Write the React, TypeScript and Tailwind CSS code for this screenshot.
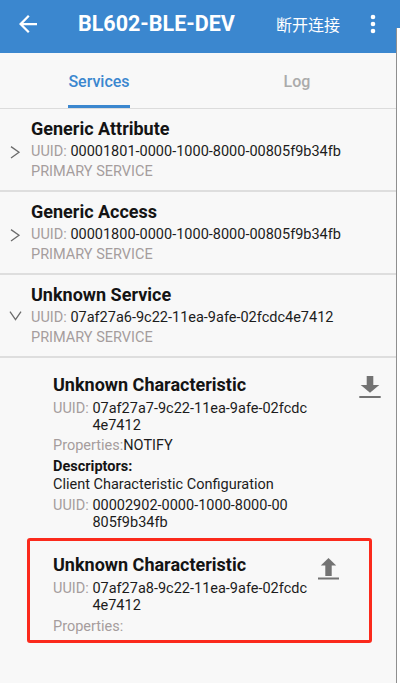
import React from "react";

type Service = { name: string; uuid: string; open?: boolean };

const services: Service[] = [
  { name: "Generic Attribute", uuid: "00001801-0000-1000-8000-00805f9b34fb" },
  { name: "Generic Access", uuid: "00001800-0000-1000-8000-00805f9b34fb" },
  { name: "Unknown Service", uuid: "07af27a6-9c22-11ea-9afe-02fcdc4e7412", open: true },
];

function Chevron({ open }: { open?: boolean }) {
  return (
    <svg width="31" height="60" fill="none" stroke="#6b6b6b" strokeWidth="1.3">
      {open ? (
        <polyline points="10,29.7 15.5,37.5 21,29.7" />
      ) : (
        <polyline points="11,30.6 19,36.3 11,42" />
      )}
    </svg>
  );
}

function ServiceRow({ name, uuid, open }: Service) {
  return (
    <div className="flex border-b-2 border-[#dedede] pt-[7px] pb-[8px]">
      <div className="w-[31px] shrink-0">
        <Chevron open={open} />
      </div>
      <div className="flex flex-col">
        <div className="text-[18px] leading-[26px] font-bold text-[#141414]">{name}</div>
        <div className="flex text-[14.5px] leading-[20px]">
          <span className="text-[#a59d9d]">UUID:&nbsp;</span>
          <span className="text-[#1c1c1c]">{uuid}</span>
        </div>
        <div className="text-[14.5px] leading-[20px] text-[#a59d9d]">PRIMARY SERVICE</div>
      </div>
    </div>
  );
}

function Uuid({ lines, className }: { lines: string[]; className: string }) {
  return (
    <div className={"flex text-[14.5px] leading-[17px] " + className}>
      <span className="text-[#a59d9d]">UUID:&nbsp;</span>
      <div className="flex flex-col text-[#1c1c1c]">
        {lines.map((l) => (
          <span key={l}>{l}</span>
        ))}
      </div>
    </div>
  );
}

function DownloadIcon() {
  return (
    <svg width="22" height="23" fill="#737373">
      <rect x="7.7" y="0" width="6.6" height="9.5" />
      <polygon points="1.7,9 20.3,9 11,16.8" />
      <rect x="0.3" y="20" width="21.4" height="2" />
    </svg>
  );
}

function UploadIcon() {
  return (
    <svg width="21" height="22" fill="#737373">
      <polygon points="10.5,0 18.2,7.6 2.8,7.6" />
      <rect x="7.3" y="7" width="6.4" height="11" />
      <rect x="0" y="19.5" width="21" height="2" />
    </svg>
  );
}

export default function App() {
  return (
    <div className="flex w-[400px] h-[683px] bg-white font-['Roboto',sans-serif] overflow-hidden">
      <div className="w-[396px] h-full shrink-0 flex flex-col bg-[#f8f8f8]">
        {/* toolbar */}
        <div className="h-[53px] shrink-0 flex items-center bg-[#3b87cf] pl-[19px] pr-[20px] pb-[5px] text-white">
          <svg width="18" height="18" viewBox="4 4 16 16" fill="#ffffff">
            <path d="M20 11H7.83l5.59-5.59L12 4l-8 8 8 8 1.41-1.41L7.83 13H20v-2z" />
          </svg>
          <div className="ml-[41px] text-[21.5px] leading-[28px] font-bold">BL602-BLE-DEV</div>
          <div className="flex-1" />
          <div className="mr-[30px] text-[16px] leading-[22px] font-['Noto_Sans_CJK_SC',sans-serif]">断开连接</div>
          <svg width="6" height="20" fill="#ffffff">
            <circle cx="3" cy="3" r="2.3" />
            <circle cx="3" cy="10" r="2.3" />
            <circle cx="3" cy="17" r="2.3" />
          </svg>
        </div>

        {/* tabs */}
        <div className="h-[56px] shrink-0 flex border-b border-[#dcdcdc]">
          <div className="flex-1 flex justify-center">
            <div className="h-full flex items-center pt-[6px] border-b-[3px] border-[#3b87cf] text-[16px] font-medium text-[#3b87cf]">
              Services
            </div>
          </div>
          <div className="flex-1 flex justify-center">
            <div className="h-full flex items-center pt-[6px] border-b-[3px] border-transparent text-[16px] font-medium text-[#ababab]">
              Log
            </div>
          </div>
        </div>

        {services.map((s) => (
          <ServiceRow key={s.uuid} {...s} />
        ))}

        {/* characteristic 1 */}
        <div className="flex pl-[53px] pt-[15px]">
          <div className="flex-1 min-w-0">
            <div className="text-[18px] leading-[24px] font-bold text-[#141414]">Unknown Characteristic</div>
            <Uuid className="mt-[3px]" lines={["07af27a7-9c22-11ea-9afe-02fcdc", "4e7412"]} />
            <div className="mt-[3px] text-[14.5px] leading-[17px]">
              <span className="text-[#a59d9d]">Properties:</span>
              <span className="text-[#1c1c1c]">NOTIFY</span>
            </div>
            <div className="mt-[4px] text-[14.5px] leading-[17px] font-bold text-[#141414]">Descriptors:</div>
            <div className="mt-[1px] text-[14.5px] leading-[17px] text-[#1c1c1c]">Client Characteristic Configuration</div>
            <Uuid className="mt-[4px]" lines={["00002902-0000-1000-8000-00", "805f9b34fb"]} />
          </div>
          <div className="w-[41px] shrink-0" />
          <div className="w-[37px] shrink-0 pt-[3px]">
            <DownloadIcon />
          </div>
        </div>

        {/* characteristic 2 */}
        <div className="relative flex pl-[53px] pt-[22px]">
          <div className="flex-1 min-w-0">
            <div className="text-[18px] leading-[24px] font-bold text-[#141414]">Unknown Characteristic</div>
            <Uuid className="mt-[3px]" lines={["07af27a8-9c22-11ea-9afe-02fcdc", "4e7412"]} />
            <div className="mt-[4px] text-[14.5px] leading-[17px] text-[#a59d9d]">Properties:</div>
          </div>
          <div className="w-[41px] shrink-0 pt-[5px]">
            <UploadIcon />
          </div>
          <div className="w-[37px] shrink-0" />
          <div className="absolute top-[7px] left-[27px] w-[345px] h-[105px] border-[3px] border-[#fb2a1c] rounded-[3px]" />
        </div>
      </div>

      <div className="flex-1 flex flex-col">
        <div className="h-[28px] bg-[#3b87cf]" />
        <div className="flex-1 border-l border-[#8f8f8f] bg-white" />
      </div>
    </div>
  );
}
